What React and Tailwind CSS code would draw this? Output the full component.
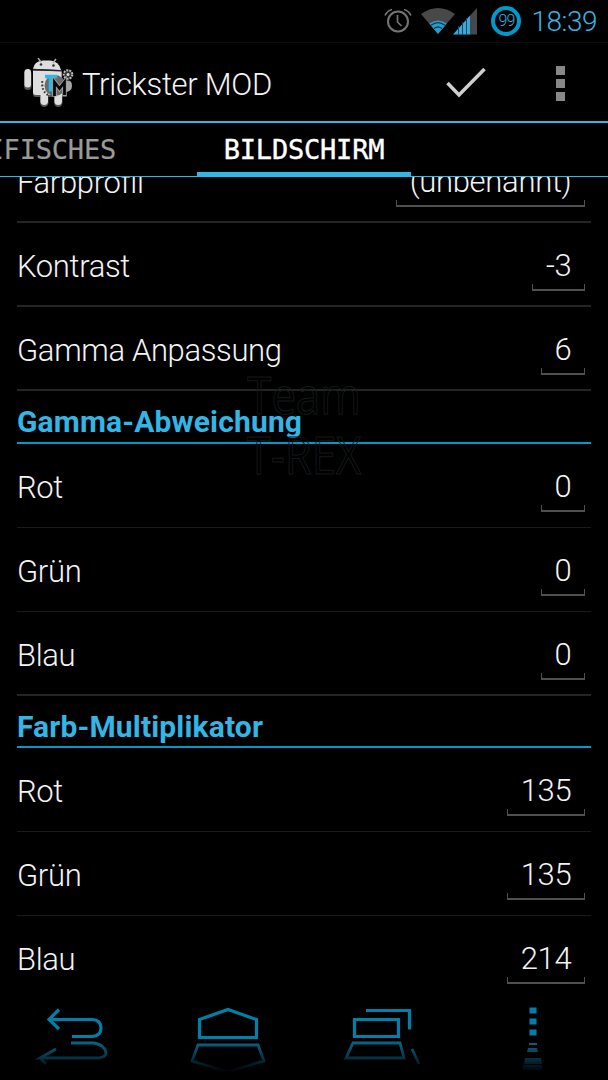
import React from 'react';

const sections = [
  {
    rows: [
      { label: 'Farbprofil', value: '(unbenannt)' },
      { label: 'Kontrast', value: '-3' },
      { label: 'Gamma Anpassung', value: '6' },
    ],
  },
  {
    title: 'Gamma-Abweichung',
    rows: [
      { label: 'Rot', value: '0' },
      { label: 'Grün', value: '0' },
      { label: 'Blau', value: '0' },
    ],
  },
  {
    title: 'Farb-Multiplikator',
    rows: [
      { label: 'Rot', value: '135' },
      { label: 'Grün', value: '135' },
      { label: 'Blau', value: '214' },
    ],
  },
];

const AlarmIcon = () => (
  <svg className="w-7 h-7" viewBox="0 0 28 28" fill="none" stroke="#747474">
    <circle cx="14" cy="14.5" r="10" strokeWidth="2" />
    <path d="M13.5 8v7l4 4" strokeWidth="1.7" />
    <path d="M1 8.5Q3 4 8 2.5M20 2.5Q25 4 27 8.5" strokeWidth="1.7" />
  </svg>
);

const WifiIcon = () => (
  <svg className="w-[34px] h-[27px]" viewBox="0 0 34 27">
    <path d="M0 6Q17-6 34 6L17 26Z" fill="#484848" />
    <path d="M8.3 15.6Q17 9.6 25.7 15.6L17 26Z" fill="#2b9cc8" />
    <path d="M10 17.3Q17 12 24 17.3M13 20.5Q17 17.5 21 20.5" fill="none" stroke="#0b3f55" strokeWidth="1.3" />
  </svg>
);

const SignalIcon = () => (
  <svg className="w-6 h-[27px]" viewBox="0 0 24 27">
    <path d="M0 26.5L17.5 7V26.5Z" fill="#39a9d8" />
    <path d="M17.5 7L24 0V26.5H17.5Z" fill="#484848" />
    <path d="M5.5 18v9M9.5 14v13M13.5 10v17" stroke="#0c4a64" strokeWidth="1" />
  </svg>
);

const StatusBar = () => (
  <div className="h-[43px] shrink-0 flex items-center justify-end border-b border-[#0b0b0b] pr-[11px]">
    <AlarmIcon />
    <div className="ml-[9px] flex">
      <WifiIcon />
      <div className="-ml-[2px]">
        <SignalIcon />
      </div>
    </div>
    <div className="ml-[14px] w-[30px] h-[30px] rounded-full border-4 border-[#0099cc] flex items-center justify-center text-[16px] leading-none tracking-[-1px] text-[#33b5e5]">
      99
    </div>
    <span className="ml-[10px] text-[28px] leading-none tracking-[-0.5px] pt-px text-[#33b5e5]">18:39</span>
  </div>
);

const AppLogo = () => (
  <svg className="w-[50px] h-[50px]" viewBox="0 0 50 50">
    {/* shadow */}
    <g fill="#555">
      <rect x="0" y="12" width="7.5" height="20" rx="3.7" />
      <rect x="16" y="30" width="8.5" height="19" rx="4.2" />
      <rect x="30" y="30" width="8.5" height="19" rx="4.2" />
      <path d="M9 14h29v22q0 3-3 3H12q-3 0-3-3z" />
    </g>
    {/* robot */}
    <g fill="#dedede">
      <rect x="0.5" y="11" width="6.5" height="18.5" rx="3.2" />
      <rect x="16.5" y="29" width="7.5" height="18" rx="3.7" />
      <rect x="30.5" y="29" width="7.5" height="18" rx="3.7" />
      <path d="M9 12.5h28.5V34q0 3-3 3H12q-3 0-3-3z" />
      <path d="M9 11Q10 3 19 2.5h7Q35 3 37 12z" />
    </g>
    <path d="M14 0l3 4M32 1l-3 4" stroke="#aaa" strokeWidth="1.5" />
    <path d="M9 11.5l28.5 1.3" stroke="#222" strokeWidth="1.3" />
    <circle cx="17" cy="6.5" r="1.3" fill="#333" />
    <circle cx="29.5" cy="7.5" r="1.3" fill="#333" />
    {/* gears */}
    <circle cx="44" cy="16.5" r="4.3" fill="#333" stroke="#bbb" strokeWidth="2" strokeDasharray="2 1" />
    <circle cx="44" cy="16.5" r="1.5" fill="#ddd" />
    <path d="M41 23q7-2 7 5 0 6-8 6z" fill="#a5a5a5" />
    <circle cx="31" cy="27.5" r="10.5" fill="#6a6a6a" />
    <path d="M24 37Q17 33 18.5 22" fill="none" stroke="#292929" strokeWidth="2" strokeDasharray="1.6 2" />
    <path d="M21 18.5h12M26.5 18.500v15" stroke="#33b5e5" strokeWidth="3.5" />
    <path d="M30.500 38.5V24l5 6.500 5-6.500v14.500" fill="none" stroke="#a0a0a0" strokeWidth="4.5" />
    <path d="M30.500 38V24l5 6.500 5-6.500v13" fill="none" stroke="#080808" strokeWidth="2.8" />
  </svg>
);

const ActionBar = () => (
  <div className="h-20 shrink-0 flex items-center border-b-2 border-[#33b5e5] pt-[2px] pl-6 pr-[43px]">
    <AppLogo />
    <h1 className="ml-2 pt-[2px] text-[31px] leading-none tracking-[-0.3px] text-[#f3f3f3]">Trickster MOD</h1>
    <svg className="ml-auto w-10 h-[30px]" viewBox="0 0 40 30" fill="none">
      <path d="M1.5 15L13 27 38.5 1" stroke="#cfcfcf" strokeWidth="3.5" />
    </svg>
    <div className="ml-[70px] flex flex-col gap-1">
      <span className="w-[9px] h-[9px] bg-[#888]" />
      <span className="w-[9px] h-[9px] bg-[#888]" />
      <span className="w-[9px] h-[9px] bg-[#888]" />
    </div>
  </div>
);

const Tabs = () => (
  <div className="h-[54px] shrink-0 flex border-b border-[#33b5e5] font-['DejaVu_Sans_Mono',monospace] text-[27px] tracking-[-0.2px] leading-[53px] bg-black">
    <div className="w-[197px] flex justify-end pr-[81px] overflow-hidden whitespace-nowrap text-[#9a9a9a] [-webkit-text-stroke:0.2px_#9a9a9a]">
      SPEZIFISCHES
    </div>
    <div className="w-[214px] text-center text-white border-b-4 border-[#33b5e5] [-webkit-text-stroke:0.4px_#fff]">
      BILDSCHIRM
    </div>
  </div>
);

const Row = ({ label, value, border }) => (
  <div className={`h-[84px] flex justify-between pr-[6px] ${border}`}>
    <span className="pt-[24px] text-[31px] leading-10 tracking-[-0.35px]">{label}</span>
    <div className="flex flex-col pt-[23px]">
      <span className="pl-[14px] pr-[13.6px] text-[31px] leading-10 tracking-[-0.3px]">{value}</span>
      <span className="mt-[-2px] h-[7px] border-x-[1.5px] border-b-2 border-[#505050]" />
    </div>
  </div>
);

const Section = ({ title, rows, isLast }) => {
  const borderFor = (i) => {
    if (i === rows.length - 1) return isLast ? '' : 'border-b-2 border-[#242424]';
    return title ? 'border-b border-[#1a1a1a]' : 'border-b-2 border-[#242424]';
  };

  return (
    <section>
      {title && (
        <h2 className="h-[52.5px] border-b-2 border-[#0099cc] pt-[11px] text-[30px] leading-10 tracking-[0.15px] font-bold text-[#33b5e5]">
          {title}
        </h2>
      )}
      {rows.map((row, i) => (
        <Row key={row.label} {...row} border={borderFor(i)} />
      ))}
    </section>
  );
};

const Watermark = () => (
  <div className="absolute left-0 top-[187px] w-full scale-x-[0.84] text-center text-[52px] leading-[60px] font-normal font-['Open_Sans',sans-serif] text-transparent [-webkit-text-stroke:1px_#15181a] pointer-events-none">
    <div>Team</div>
    <div>T-REX</div>
  </div>
);

const NavBar = () => (
  <div className="h-20 shrink-0">
    <svg className="w-full h-20" viewBox="0 1000 608 80" fill="none" strokeWidth="3.2">
      <defs>
        <linearGradient id="fade" gradientUnits="userSpaceOnUse" x1="0" y1="1041" x2="0" y2="1072">
          <stop offset="0" stopColor="#0b6788" />
          <stop offset="0.5" stopColor="#06374a" />
          <stop offset="1" stopColor="#000" />
        </linearGradient>
      </defs>
      <g stroke="#007fa8">
        <path d="M49 1019.500H92Q101 1020 101 1028 101 1036 92 1036.500H72M59 1009.500L49 1019.500 59 1029" />
        <path d="M199.500 1019.500L228 1009.500 256.500 1019.500V1037.500H199.500Z" />
        <path d="M354.500 1019.500H398.500V1036.500H354.500ZM366 1010.500H409.500V1029.500" />
      </g>
      <g stroke="url(#fade)" strokeWidth="2.8">
        <path d="M71 1043H94Q105 1045 106 1053 106 1057 99 1058H40L56 1049M40 1058L46 1064" />
        <path d="M198 1045H258L264 1061 228 1072 192 1061Z" />
        <path d="M353 1043H400L404 1058H346ZM412 1049L419 1064" />
      </g>
      <path d="M529.500 1007.500h7v6h-7zM529.500 1018.500h7v6h-7zM529.500 1029.500h7v6h-7z" fill="#007fa8" />
      <path d="M529 1043h8v2h-8zM528 1048h9l1 4h-11zM525 1058h16l1 6h-18zM523 1065h19v5h-20z" fill="url(#fade)" />
    </svg>
  </div>
);

export default function App() {
  return (
    <div className="w-[608px] h-[1080px] flex flex-col overflow-hidden bg-black font-['Roboto',sans-serif] font-light text-[#f3f3f3]">
      <StatusBar />
      <ActionBar />
      <Tabs />
      <main className="relative flex-1 min-h-0 overflow-hidden px-[17px]">
        <div className="-mt-[38px]">
          {sections.map((section, i) => (
            <Section key={i} {...section} isLast={i === sections.length - 1} />
          ))}
        </div>
        <Watermark />
      </main>
      <NavBar />
    </div>
  );
}
